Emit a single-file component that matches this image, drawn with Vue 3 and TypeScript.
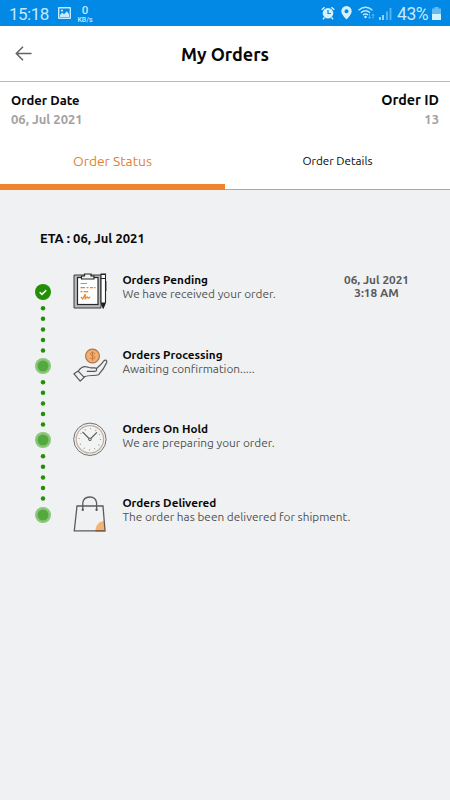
<script setup lang="ts">
interface Step {
  kind: 'pending' | 'processing' | 'hold' | 'delivered'
  title: string
  note: string
  date?: string
  time?: string
}

const steps: Step[] = [
  { kind: 'pending', title: 'Orders Pending', note: 'We have received your order.', date: '06, Jul 2021', time: '3:18 AM' },
  { kind: 'processing', title: 'Orders Processing', note: 'Awaiting confirmation.....' },
  { kind: 'hold', title: 'Orders On Hold', note: 'We are preparing your order.' },
  { kind: 'delivered', title: 'Orders Delivered', note: 'The order has been delivered for shipment.' },
]
</script>

<template>
  <div class="screen">
    <div class="statusbar">
      <span class="clock">15:18</span>
      <svg class="photo" width="13" height="12" viewBox="0 0 13 12">
        <path fill="#c3eaff" fill-rule="evenodd" d="M1 0h11a1 1 0 0 1 1 1v10a1 1 0 0 1-1 1H1a1 1 0 0 1-1-1V1a1 1 0 0 1 1-1zM1.400 1.400v9.200h10.200V1.400z" />
        <path fill="#c3eaff" d="M2 10V8l2.200-2.400L6 7.300 8.800 4.300 11 7v3z" />
        <circle cx="4" cy="3.600" r="1.100" fill="#c3eaff" />
      </svg>
      <span class="speed"><b>0</b><i>KB/s</i></span>
      <span class="grow"></span>
      <svg class="alarm" width="14" height="14" viewBox="0 0 14 14">
        <circle cx="7" cy="7.300" r="5.300" fill="#d3f1ff" />
        <path d="M.8 3.700 3.600 1.200M13.200 3.700 10.400 1.200M3.400 11.500 2 13.200M10.600 11.500 12 13.200" stroke="#d3f1ff" stroke-width="1.500" />
        <path d="M7 4v3.500h2.800" fill="none" stroke="#0288e5" stroke-width="1.200" />
      </svg>
      <svg class="pin" width="11" height="14" viewBox="0 0 11 14">
        <path fill="#d3f1ff" fill-rule="evenodd" d="M5.500 0a5.200 5.200 0 0 1 5.200 5.200C10.700 8.500 5.500 13.500 5.500 13.500S.3 8.500.3 5.200A5.200 5.200 0 0 1 5.500 0zm0 3.200a2 2 0 1 0 0 4 2 2 0 0 0 0-4z" />
      </svg>
      <svg class="wifi" width="17" height="14" viewBox="0 0 17 14">
        <path d="M.5 4.300q7-6.300 14 0M2.900 6.800q4.600-4.200 9.200 0M4.900 9.100q2.600-2.300 5.200 0" fill="none" stroke="#b6e6ff" stroke-width="1.400" />
        <circle cx="7.500" cy="11" r="1.200" fill="#d3f1ff" />
        <path d="M11.500 8v4.500m-1.300-1.400 1.300 1.500 1.300-1.500M15 12.600V8m-1.300 1.500L15 8l1.300 1.500" fill="none" stroke="#58b7f3" stroke-width="1" />
      </svg>
      <svg class="signal" width="13" height="13" viewBox="0 0 13 13">
        <path d="M1 13v-3M4 13V8" stroke="#b6e6ff" stroke-width="1.600" />
        <path d="M8 13V4.500M11.500 13V1" stroke="#5ab7f1" stroke-width="1.800" />
      </svg>
      <span class="percent">43%</span>
      <svg class="battery" width="9" height="13" viewBox="0 0 9 13">
        <path fill="#62bcf2" d="M2.500 0h4v1.500H9V7H0V1.500h2.500z" />
        <path fill="#d3f1ff" d="M0 7h9v6H0z" />
      </svg>
    </div>

    <header class="header">
      <svg class="back" width="17" height="15" viewBox="0 0 17 15">
        <path d="M16.500 7.500H1M8 .8 1.300 7.500 8 14.200" fill="none" stroke="#626262" stroke-width="1.500" />
      </svg>
      <h1>My Orders</h1>
    </header>

    <section class="info">
      <div>
        <div class="label date-label">Order Date</div>
        <div class="value">06, Jul 2021</div>
      </div>
      <div class="right">
        <div class="label id-label">Order ID</div>
        <div class="value">13</div>
      </div>
    </section>

    <nav class="tabs">
      <div class="tab active"><span>Order Status</span></div>
      <div class="tab"><span>Order Details</span></div>
    </nav>

    <main class="body">
      <div class="eta"><span>ETA : 06, Jul 2021</span></div>

      <div v-for="(step, i) in steps" :key="step.kind" class="step">
        <div class="rail">
          <svg v-if="i === 0" width="16" height="16" viewBox="0 0 16 16">
            <circle cx="8" cy="8" r="8" fill="#219006" />
            <path d="m4.700 8.300 2.200 2.100 4.400-4.200" fill="none" stroke="#fff" stroke-width="1.500" />
          </svg>
          <svg v-else width="16" height="16" viewBox="0 0 16 16">
            <circle cx="8" cy="8" r="8" fill="#8ac67b" />
            <circle cx="8" cy="8" r="5.500" fill="#55a83e" />
          </svg>
          <svg v-if="i < steps.length - 1" width="16" height="58" viewBox="0 0 16 58" fill="#219006">
            <circle v-for="n in 5" :key="n" cx="8" :cy="n * 10.6 - 2.4" r="2.250" />
          </svg>
        </div>

        <svg v-if="step.kind === 'pending'" class="icon" width="36" height="36" viewBox="0 0 36 36" fill="none">
          <path d="M1 2h27v33H1z" fill="#b9bbbc" stroke="#3a3a3a" stroke-width="1" />
          <rect x="4.500" y="4.500" width="20.500" height="27" fill="#fff" stroke="#292929" stroke-width="1.200" />
          <path fill="#eff1f3" stroke="#252525" stroke-width="1.200" d="M8.500 3h3V1h6.500v2h3v3H8.500z" />
          <path fill="#fff" stroke="#252525" stroke-width="1.100" d="M28 1h4.500v28.500L30.200 35 28 29.500zM28 5.500h4.500" />
          <path d="M28 1h4.500v1H28zM28.200 29.500h4v2L30.400 35l-2.200-3.500z" fill="#222" />
          <path d="M32.800 8v10" stroke="#252525" stroke-width="1.200" />
          <path d="M7.500 10.500h6.500M7.500 14.600h4.500m1.500 0h2m1.500 0h3m1 0h1.500M7.500 18.600h2m1.200 0h4.500M8 24l1.800 2 2.400-5v4.800l2-2 1.200 1.500 1.800-1.300" stroke="#e68628" stroke-width="1.200" />
        </svg>

        <svg v-else-if="step.kind === 'processing'" class="icon" width="36" height="36" viewBox="0 0 36 36" fill="none" stroke="#555" stroke-width="1.200" stroke-linejoin="round" stroke-linecap="round">
          <circle cx="19.500" cy="9" r="6.900" fill="#f2af71" stroke="#aa7548" />
          <path d="M21.800 6.500q-4-2-4.300.5c0 2 4.500 1.300 4.300 3.500-.2 1.800-3 1.600-4.600.6M19.500 4.700v8.600" stroke="#c17840" stroke-width=".9" />
          <path d="m1 26.800 4.200-2.700 6 6.200-4 3.800zM5.300 24c2.200-3 4.200-4.600 7-4.400 2.500.1 4 1.300 6.200 1.200h3.300c2.500 0 2.500 3.300 0 3.600h-7.500M23.500 21.500l5-4.600 2.200-2.900c2-2 3.500-.4 3 1.400-2 4.700-4.700 8.500-8.200 12.400-3.800 1.400-9.500-.2-14.300 2" />
        </svg>

        <svg v-else-if="step.kind === 'hold'" class="icon" width="36" height="36" viewBox="0 0 36 36" fill="none">
          <circle cx="16.900" cy="18.300" r="16.200" stroke="#707070" stroke-width="1" />
          <circle cx="16.900" cy="18.300" r="13.700" fill="#f2f3f3" stroke="#c1ae9e" stroke-width="1.200" />
          <circle cx="16.900" cy="18.300" r="10.600" stroke="#858585" stroke-width="1.200" stroke-dasharray=".8 4.750" />
          <path d="m9.500 10.900 7.400 7.400 7-7M15.800 19.400l1.100-1.100 1.200 1.200" stroke="#565656" stroke-width="1.200" />
          <circle cx="16.900" cy="18.300" r="1.200" fill="#fff" stroke="#565656" />
        </svg>

        <svg v-else class="icon" width="36" height="36" viewBox="0 0 36 36" fill="none">
          <path d="M22.500 35c0-5.500 3-9.300 8.300-10l1 10z" fill="#f1b475" />
          <path d="M4 10h26l2 24.800H1.300z" stroke="#5b5b5b" stroke-width="1.300" />
          <path d="M9.800 13.500V7q.6-5.800 6.800-6t7 6v6.500" stroke="#5b5b5b" stroke-width="1.300" />
          <circle cx="9.800" cy="13.700" r="1.200" fill="#5b5b5b" />
          <circle cx="23.600" cy="13.700" r="1.200" fill="#5b5b5b" />
          <path d="M22.500 34.800h9.700" stroke="#895b37" stroke-width="1.300" />
        </svg>

        <div class="text">
          <div class="title"><span>{{ step.title }}</span></div>
          <div class="note"><span>{{ step.note }}</span></div>
        </div>
        <div v-if="step.date" class="when">
          <div>{{ step.date }}</div>
          <div>{{ step.time }}</div>
        </div>
      </div>
    </main>
  </div>
</template>

<style>
body {
  background: #eff1f3;
}
</style>

<style scoped>
.screen {
  width: 450px;
  height: 800px;
  overflow: hidden;
  background: #eff1f3;
  font-family: Ubuntu, "Noto Sans", sans-serif;
  color: #080808;
  white-space: nowrap;
}
.statusbar {
  height: 26px;
  box-sizing: border-box;
  padding: 0 9px;
  display: flex;
  align-items: center;
  background: #0288e5;
  color: #c3eaff;
  font-family: Roboto, sans-serif;
}
.clock {
  width: 49px;
  padding-top: 2px;
  font-size: 17px;
  line-height: 24px;
  letter-spacing: -0.5px;
}
.speed {
  margin-left: 5px;
  width: 18px;
  padding-top: 1px;
  display: flex;
  flex-direction: column;
  align-items: center;
}
.speed b {
  font-size: 11.5px;
  line-height: 12px;
  font-weight: 500;
}
.speed i {
  font-size: 7px;
  line-height: 8px;
  font-style: normal;
  font-weight: 500;
}
.grow {
  flex: 1;
}
.pin {
  margin-left: 6px;
}
.wifi {
  margin-left: 6px;
}
.signal {
  margin-left: 4px;
}
.percent {
  margin-left: 5px;
  width: 35px;
  padding-top: 2px;
  font-size: 17.5px;
  line-height: 24px;
  letter-spacing: -0.4px;
}
.header {
  height: 56px;
  box-sizing: border-box;
  border-bottom: 1px solid #b9b9b9;
  background: #fff;
  display: grid;
  grid-template-columns: 15px 17px 1fr 32px;
  align-items: center;
}
.back {
  grid-column: 2;
}
.header h1 {
  margin: 0;
  text-align: center;
  font-size: 18px;
  line-height: 24px;
  font-weight: 700;
  letter-spacing: -0.05px;
}
.info {
  height: 50px;
  box-sizing: border-box;
  padding: 9px 11px 0;
  display: flex;
  justify-content: space-between;
  background: #fff;
}
.right {
  text-align: right;
}
.label {
  height: 19px;
  line-height: 19px;
  font-weight: 700;
}
.date-label {
  font-size: 13px;
}
.id-label {
  font-size: 14.3px;
}
.value {
  font-size: 13px;
  line-height: 18px;
  font-weight: 700;
  color: #a2a2a2;
}
.tabs {
  height: 58px;
  display: flex;
  background: #fff;
}
.tab {
  flex: 1;
  box-sizing: border-box;
  height: 58px;
  padding-top: 19px;
  border-bottom: 1px solid #a9a9a9;
  text-align: center;
  font-size: 11.7px;
  line-height: 20px;
}
.tab.active {
  border-bottom: 6px solid #f0832d;
  color: #df8131;
  font-size: 13.8px;
}
.body {
  padding: 38px 30px 0 35px;
}
.eta {
  height: 45px;
  padding-left: 5px;
  font-size: 13px;
  line-height: 20px;
  font-weight: 700;
}
.step {
  height: 74.2px;
  display: flex;
  align-items: flex-start;
}
.rail {
  width: 16px;
  padding-top: 11px;
}
.rail svg {
  display: block;
}
.icon {
  margin-left: 22px;
  flex: none;
}
.text {
  flex: 1;
  margin-left: 13.4px;
  padding-top: 0.35px;
}
.title {
  font-size: 11.7px;
  line-height: 14px;
  font-weight: 700;
}
.note {
  font-size: 11.8px;
  line-height: 14px;
  color: #515151;
}
.when {
  width: 87px;
  text-align: center;
  font-size: 11.8px;
  line-height: 13px;
  font-weight: 700;
  color: #5a5a5a;
}
</style>
